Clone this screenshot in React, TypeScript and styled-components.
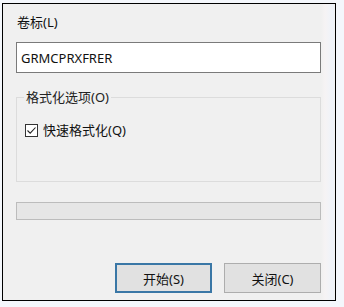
import React, { useState } from 'react';
import styled, { createGlobalStyle } from 'styled-components';

const GlobalStyle = createGlobalStyle`
  html, body {
    margin: 0;
    padding: 0;
    background: #f4f7fc;
    font-family: "Noto Sans", "Noto Sans CJK SC", sans-serif;
  }
`;

const Dialog = styled.div`
  box-sizing: border-box;
  margin: 3px 0 0 2px;
  width: 334px;
  height: 298px;
  border: 1px solid #000;
  background: linear-gradient(to right, #f0f0f0 0, #f0f0f0 318px, #f6f3f4 322px, #eef3fa 330px, #f2f2f2 100%);
  padding: 9px 14px 0 13px;
  display: flex;
  flex-direction: column;
  color: #111;
  font-size: 13px;
`;

const Label = styled.div`
  line-height: 18px;
  height: 18px;
  padding-left: 1px;
`;

const TextInput = styled.input`
  box-sizing: border-box;
  margin-top: 11px;
  width: 305px;
  height: 31px;
  border: 1px solid #7a7a7a;
  background: #fff;
  padding: 0 0 0 4px;
  font-family: "Noto Sans", "Liberation Sans", sans-serif;
  font-size: 13px;
  color: #111;
  outline: none;
`;

const Group = styled.fieldset`
  box-sizing: border-box;
  margin: 16px 0 0 0;
  width: 305px;
  height: 93px;
  border: 1px solid #dcdcdc;
  padding: 0 0 0 8px;
  min-width: 0;
`;

const Legend = styled.legend`
  margin-left: -1px;
  padding: 0 2px;
  line-height: 16px;
  font-size: 13px;
  color: #222;
`;

const CheckRow = styled.label`
  margin-top: 17px;
  display: flex;
  align-items: center;
  gap: 5px;
  line-height: 16px;
  cursor: default;
`;

const Box = styled.span`
  box-sizing: border-box;
  width: 13px;
  height: 13px;
  border: 1px solid #333;
  background: #fff;
  display: flex;
  align-items: center;
  justify-content: center;
`;

const Progress = styled.div`
  box-sizing: border-box;
  margin-top: 20px;
  width: 305px;
  height: 18px;
  border: 1px solid #bcbcbc;
  background: #e6e6e6;
`;

const Buttons = styled.div`
  margin-top: 43px;
  display: flex;
  justify-content: flex-end;
  gap: 12px;
  width: 305px;
`;

const Button = styled.button<{ primary?: boolean }>`
  box-sizing: border-box;
  width: 97px;
  height: 30px;
  background: #e1e1e1;
  border: ${({ primary }) => (primary ? '2px solid #3a77a6' : '1px solid #adadad')};
  font-family: "Noto Sans", "Noto Sans CJK SC", sans-serif;
  font-size: 13px;
  color: #111;
  padding: 0;
`;

export default function App() {
  const [checked, setChecked] = useState(true);
  return (
    <>
      <GlobalStyle />
      <Dialog>
        <Label>卷标(L)</Label>
        <TextInput defaultValue="GRMCPRXFRER" />
        <Group>
          <Legend>格式化选项(O)</Legend>
          <CheckRow onClick={() => setChecked(!checked)}>
            <Box>
              {checked && (
                <svg width="11" height="11" viewBox="0 0 11 11">
                  <path d="M1.5 5.5 L4.2 8.2 L9.5 2.5" fill="none" stroke="#222" strokeWidth="1.1" />
                </svg>
              )}
            </Box>
            <span>快速格式化(Q)</span>
          </CheckRow>
        </Group>
        <Progress />
        <Buttons>
          <Button primary>开始(S)</Button>
          <Button>关闭(C)</Button>
        </Buttons>
      </Dialog>
    </>
  );
}
